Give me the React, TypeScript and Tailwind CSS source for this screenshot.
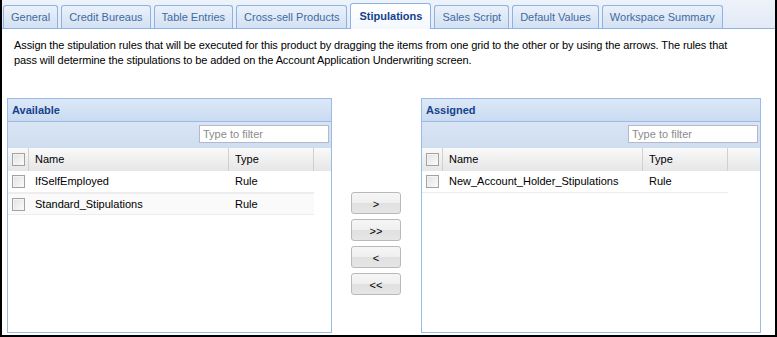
import React from "react";

const TABS = [
  "General",
  "Credit Bureaus",
  "Table Entries",
  "Cross-sell Products",
  "Stipulations",
  "Sales Script",
  "Default Values",
  "Workspace Summary",
];

const AVAILABLE = [
  { name: "IfSelfEmployed", type: "Rule" },
  { name: "Standard_Stipulations", type: "Rule" },
];

const ASSIGNED = [{ name: "New_Account_Holder_Stipulations", type: "Rule" }];

const tahoma = { fontFamily: '"Liberation Sans", Arial, sans-serif' };

const CheckBox = () => (
  <div className="w-[13px] h-[13px] border border-[#a2a2a2] bg-gradient-to-br from-[#e2e2e2] to-[#fbfbfb] shadow-[inset_1px_1px_0_#f4f4f4]" />
);

const Tab = ({ label, active }: { label: string; active?: boolean }) =>
  active ? (
    <div className="h-[26px] -mb-px px-[8px] flex items-center border border-b-0 border-[#8db2e3] rounded-t-[3px] bg-gradient-to-b from-white to-[#f4f8fd] text-[11px] font-bold text-[#15428b]">
      {label}
    </div>
  ) : (
    <div className="h-[23px] px-[7px] flex items-center border border-b-0 border-[#8db2e3] rounded-t-[3px] bg-gradient-to-b from-[#eaf1fa] to-[#d3e1f3] text-[11px] text-[#416aa3]">
      {label}
    </div>
  );

const Panel = ({
  title,
  rows,
  width,
}: {
  title: string;
  rows: { name: string; type: string }[];
  width: string;
}) => (
  <div className={`${width} h-full border border-[#99bbe8] flex flex-col bg-white`}>
    <div className="h-[23px] shrink-0 flex items-center pl-[4px] border-b border-[#99bbe8] bg-gradient-to-b from-[#dce8f7] to-[#cadbf1] text-[11px] font-bold text-[#15428b]">
      {title}
    </div>
    <div className="h-[26px] shrink-0 flex justify-end items-start pt-[3px] pr-[2px] bg-gradient-to-b from-[#d9e5f4] to-[#cfddf0]">
      <div className="w-[130px] h-[18px] border border-[#b5b8c8] bg-white flex items-center pl-[3px] text-[11px] text-[#8c8c8c]">
        Type to filter
      </div>
    </div>
    <div className="h-[23px] shrink-0 flex bg-gradient-to-b from-[#f9f9f9] to-[#e6e6e6] text-[11px] text-black">
      <div className="w-[21px] flex items-center justify-center border-r border-[#d0d0d0]">
        <CheckBox />
      </div>
      <div className="w-[200px] flex items-center pl-[6px] border-r border-[#d0d0d0]">Name</div>
      <div className="w-[85px] flex items-center pl-[6px] border-r border-[#d0d0d0]">Type</div>
      <div className="flex-1" />
    </div>
    <div className="flex-1 flex flex-col text-[11px] text-black">
      {rows.map((r, i) => (
        <div
          key={r.name}
          className={`w-[306px] h-[22px] flex border-b border-[#ededed] ${i % 2 === 1 ? "bg-[#fafafa] border-t border-t-[#ededed]" : "bg-white"}`}
        >
          <div className="w-[21px] flex items-center justify-center">
            <CheckBox />
          </div>
          <div className="w-[200px] flex items-center pl-[6px]">{r.name}</div>
          <div className="w-[85px] flex items-center pl-[6px]">{r.type}</div>
        </div>
      ))}
    </div>
  </div>
);

const MoveButton = ({ label }: { label: string }) => (
  <div className="h-[22px] w-[50px] rounded-[3px] border border-[#b9b9b9] bg-[linear-gradient(#f6f6f6_0%,#efefef_50%,#e0e0e0_50%,#e6e6e6_100%)] flex items-center justify-center pt-[2px] text-[11px] text-black">
    {label}
  </div>
);

export default function App() {
  return (
    <div
      className="w-[777px] h-[337px] border-x-2 border-b-2 border-black bg-white flex flex-col overflow-hidden"
      style={tahoma}
    >
      <div className="h-[29px] shrink-0 flex items-end gap-[3px] pl-[1px] border-b border-[#8db2e3] bg-gradient-to-b from-[#eef3fa] to-[#e2eaf6]">
        {TABS.map((t) => (
          <Tab key={t} label={t} active={t === "Stipulations"} />
        ))}
      </div>
      <div className="pl-[12px] pr-[24px] pt-[9px] text-[11px] leading-[15px] tracking-[-0.1px] text-black">
        Assign the stipulation rules that will be executed for this product by dragging the items from one grid to the other or
        by using the arrows. The rules that pass will determine the stipulations to be added on the Account Application
        Underwriting screen.
      </div>
      <div className="mt-[30px] h-[235px] flex pl-[5px]">
        <Panel title="Available" rows={AVAILABLE} width="w-[325px]" />
        <div className="ml-[19px] w-[50px] pt-[94px] flex flex-col gap-[5px]">
          <MoveButton label=">" />
          <MoveButton label=">>" />
          <MoveButton label="<" />
          <MoveButton label="<<" />
        </div>
        <div className="ml-[20px]">
          <Panel title="Assigned" rows={ASSIGNED} width="w-[340px]" />
        </div>
      </div>
    </div>
  );
}
